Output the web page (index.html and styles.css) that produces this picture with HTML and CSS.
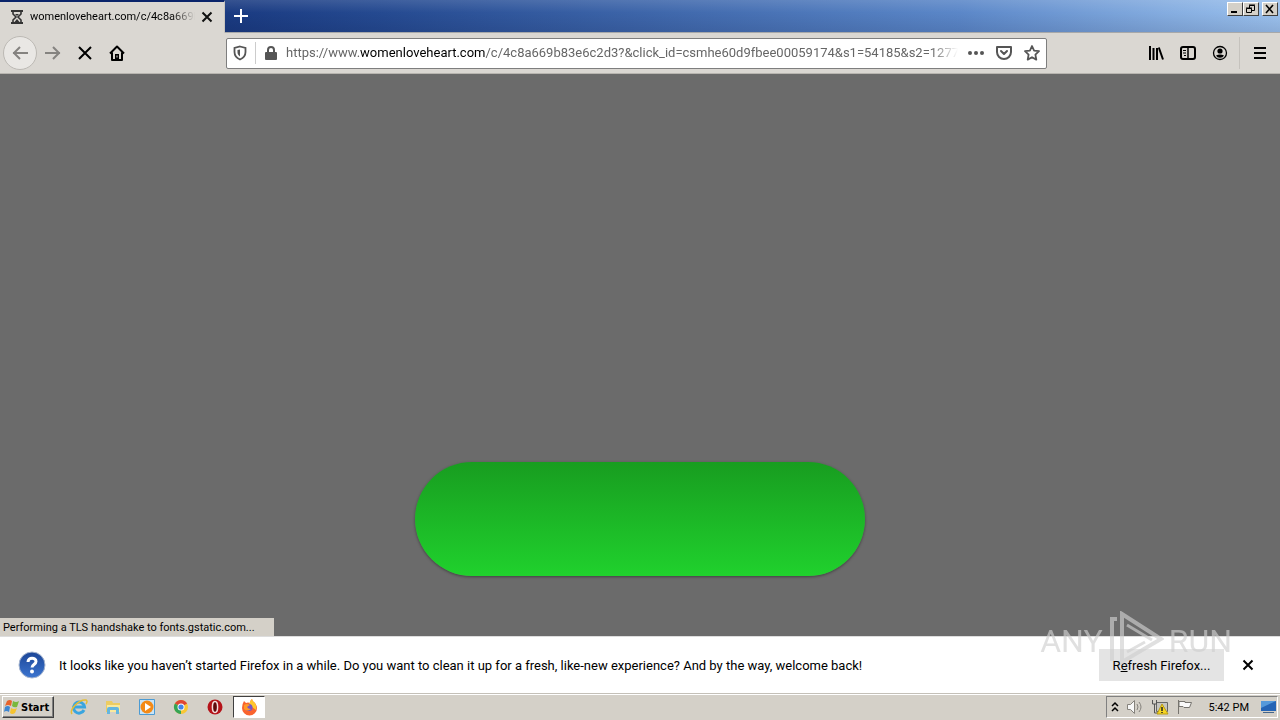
FILE: index.html
```html
<!DOCTYPE html>
<html lang="en">
<head>
<meta charset="utf-8">
<title>womenloveheart.com</title>
<link rel="stylesheet" href="styles.css">
</head>
<body>
<div class="desktop">
  <header class="titlebar">
    <div class="tab">
      <svg class="tab-icon" width="14" height="16" viewBox="0 0 14 16" fill="none" stroke="#333" stroke-width="2"><path d="M1 2h12M1 14h12"/><path d="M3 3v2l3 3-3 3v2M11 3v2L8 8l3 3v2" stroke-width="1.6"/><path d="M5 5h4L7 7zM4.500 13L7 10l2.500 3z" fill="#333" stroke="none"/></svg>
      <span class="tab-title">womenloveheart.com/c/4c8a669b</span>
      <button class="plain" aria-label="Close tab"><svg width="12" height="12" viewBox="0 0 12 12" stroke="#111" stroke-width="2"><path d="M1.500 1.500l9 9M10.500 1.500l-9 9"/></svg></button>
    </div>
    <button class="plain new-tab" aria-label="New tab"><svg width="14" height="14" viewBox="0 0 14 14" stroke="#fff" stroke-width="2"><path d="M7 0v14M0 7h14"/></svg></button>
    <div class="window-controls">
      <button class="win" aria-label="Minimize"><svg width="12" height="10" viewBox="0 0 12 10"><path d="M2 7h6v2H2z"/></svg></button>
      <button class="win" aria-label="Restore"><svg width="12" height="10" viewBox="0 0 12 10" fill="none" stroke="#000"><path d="M4.500 4V1.500h5v5H7M4 1h6M1.500 4.500h5v4h-5zM1 4h6"/></svg></button>
      <button class="win win-close" aria-label="Close"><svg width="12" height="10" viewBox="0 0 12 10" stroke="#000" stroke-width="1.600"><path d="M2 1l7 8M9 1L2 9"/></svg></button>
    </div>
  </header>
  <nav class="toolbar">
    <button class="plain tool back" aria-label="Back"><svg width="16" height="16" viewBox="0 0 16 16" fill="none" stroke="#858380" stroke-width="2"><path d="M16 8H1M8 2L2 8l6 6"/></svg></button>
    <button class="plain tool" aria-label="Forward"><svg width="16" height="16" viewBox="0 0 16 16" fill="none" stroke="#858380" stroke-width="2"><path d="M0 8h15M8 2l6 6-6 6"/></svg></button>
    <button class="plain tool" aria-label="Stop"><svg width="16" height="16" viewBox="0 0 16 16" stroke="#000" stroke-width="2"><path d="M2 2l12 12M14 2L2 14"/></svg></button>
    <button class="plain tool" aria-label="Home"><svg width="16" height="16" viewBox="0 0 16 16" fill="none" stroke="#000" stroke-width="2" stroke-linejoin="round"><path d="M1 8.500L8 1.500l7 7M3 7.500V15h10V7.500"/><path d="M6 9h4v5H6z" fill="#000" stroke="none"/><path d="M8 10.500v2" stroke="#dad7d2" stroke-width="1"/></svg></button>
    <div class="address">
      <svg width="14" height="16" viewBox="0 0 14 16" fill="none" stroke="#555" stroke-width="1.800"><path d="M7 1.500l5.500 1.500v4c0 4-2 6-5.500 7.500C3.500 13 1.500 11 1.500 7V3z"/><path d="M7 4.500v7C5.200 10.300 4.500 9 4.500 7V5z" fill="#555" stroke="none"/></svg>
      <span class="separator"></span>
      <svg width="14" height="16" viewBox="0 0 14 16"><rect x="1" y="7" width="12" height="8" rx="1" fill="#555"/><path d="M4 8V5a3 3 0 0 1 6 0v3" fill="none" stroke="#555" stroke-width="2"/></svg>
      <div class="url" role="textbox" aria-label="Address">https://www.<b>womenloveheart.com</b>/c/4c8a669b83e6c2d3?&amp;click_id=csmhe60d9fbee00059174&amp;s1=54185&amp;s2=127749</div>
      <button class="plain" aria-label="Page actions"><svg width="16" height="16" viewBox="0 0 16 16" fill="#555"><circle cx="2" cy="8" r="2"/><circle cx="8" cy="8" r="2"/><circle cx="14" cy="8" r="2"/></svg></button>
      <button class="plain" aria-label="Save to Pocket"><svg width="16" height="16" viewBox="0 0 16 16" fill="none" stroke="#555" stroke-width="2" stroke-linejoin="round"><path d="M1 2h14v5a7 7 0 0 1-14 0z"/><path d="M5 6l3 3 3-3" stroke-linecap="round"/></svg></button>
      <button class="plain" aria-label="Bookmark"><svg width="16" height="16" viewBox="0 0 16 16" fill="none" stroke="#555" stroke-width="1.800" stroke-linejoin="round"><path d="M8 1l2.100 4.600 4.900.6-3.600 3.400.9 5L8 12.200l-4.300 2.400.9-5L1 6.200l4.900-.6z"/></svg></button>
    </div>
    <div class="tools-right">
      <button class="plain tool" aria-label="Library"><svg width="16" height="16" viewBox="0 0 16 16" stroke="#000" stroke-width="2"><path d="M2 1v14M5.500 3v12M9 3v12M10.800 2.500l4.200 12"/></svg></button>
      <button class="plain tool" aria-label="Sidebars"><svg width="16" height="16" viewBox="0 0 16 16" fill="none" stroke="#000"><rect x="1" y="2" width="14" height="12" rx="2" stroke-width="2"/><path d="M8 2v12" stroke-width="1.500"/><path d="M3 5.500h3M3 8h3M4 10.500h2"/></svg></button>
      <button class="plain tool" aria-label="Account"><svg width="16" height="16" viewBox="0 0 16 16"><circle cx="8" cy="8" r="6.500" fill="none" stroke="#000" stroke-width="1.300"/><circle cx="8" cy="6" r="2.600"/><path d="M4 10.500Q8 8.500 12 10.500 11 12.800 8 12.800T4 10.500z"/></svg></button>
      <span class="tool-rule"></span>
      <button class="plain tool" aria-label="Menu"><svg width="12" height="12" viewBox="0 0 12 12" stroke="#000" stroke-width="2"><path d="M0 1h12M0 6h12M0 11h12"/></svg></button>
    </div>
  </nav>
  <main class="page">
    <button class="cta" aria-label="Continue"></button>
    <div class="status">Performing a TLS handshake to fonts.gstatic.com...</div>
  </main>
  <section class="notice">
    <svg width="28" height="28" viewBox="0 0 28 28"><defs><linearGradient id="help" x2="0" y2="1"><stop stop-color="#1c4697"/><stop offset="1" stop-color="#3c75d0"/></linearGradient></defs><circle cx="14" cy="14" r="13" fill="url(#help)" stroke="#a6b5cf"/><path d="M10 11c0-5 8-5 8-.5 0 3-4 3-4 6" fill="none" stroke="#fff" stroke-width="3"/><circle cx="14" cy="20.500" r="2" fill="#fff"/></svg>
    <p class="notice-text">It looks like you haven’t started Firefox in a while. Do you want to clean it up for a fresh, like-new experience? And by the way, welcome back!</p>
    <button class="refresh">R<u>e</u>fresh Firefox...</button>
    <button class="plain notice-close" aria-label="Dismiss"><svg width="12" height="12" viewBox="0 0 12 12" stroke="#000" stroke-width="2"><path d="M1.500 1.500l9 9M10.500 1.500l-9 9"/></svg></button>
    <div class="watermark">
      <span>ANY</span>
      <svg width="56" height="60" viewBox="0 0 56 60" fill="none" stroke="#d0d0d0" stroke-width="4"><path d="M9 8H4v42"/><path d="M14 3l39 25-39 23z"/><path d="M19 14l25 15M19 41l18-10" stroke-width="3"/></svg>
      <span>RUN</span>
    </div>
  </section>
  <footer class="taskbar">
    <button class="start"><svg width="16" height="16" viewBox="0 0 16 16"><path d="M3 2q3-2 5 0L7 7Q4 5 1 7z" fill="#e8632b"/><path d="M9 2q3 2 6 0l-2 6q-3 1-5-1z" fill="#79b83c"/><path d="M1 8q3-2 5 0l-1 5q-3-2-5 0z" fill="#3e86d1"/><path d="M7 9q3 2 6 0l-2 5q-3 2-5 0z" fill="#f5c330"/></svg>Start</button>
    <div class="launchers">
      <button class="launch" aria-label="Internet Explorer"><svg width="18" height="18" viewBox="0 0 18 18" fill="none"><path d="M14 12a5.500 5.500 0 1 1 .5-3H5" stroke="#39a5df" stroke-width="3"/><path d="M2 16C-1 12 9 1 16 2q2 1 0 4" stroke="#e4bd35" stroke-width="1.500"/></svg></button>
      <button class="launch" aria-label="Explorer"><svg width="18" height="18" viewBox="0 0 18 18"><path d="M2 3h6l1 2h7v9H2z" fill="#edcc62"/><path d="M3 7h13v7H3z" fill="#fae99d"/><path d="M3 16v-5q0-2 2-2h8q2 0 2 2v5h-3v-4H6v4z" fill="#65b6df"/></svg></button>
      <button class="launch" aria-label="Media Player"><svg width="18" height="18" viewBox="0 0 18 18"><path d="M1.500 1.500h15v15h-15z" fill="#c9e4f7" stroke="#4c9bd3"/><circle cx="9" cy="9" r="6.500" fill="#f48a16"/><path d="M7 5l6 4-6 4z" fill="#fff"/></svg></button>
      <button class="launch" aria-label="Chrome"><svg width="18" height="18" viewBox="0 0 18 18"><circle cx="9" cy="9" r="7" fill="#f9c734"/><path d="M9 9L2.900 5.500a7 7 0 0 1 12.200 0z" fill="#df4634"/><path d="M9 9v7A7 7 0 0 1 2.900 5.500z" fill="#35a455"/><circle cx="9" cy="9" r="3.500" fill="#fff"/><circle cx="9" cy="9" r="2.600" fill="#4384e8"/></svg></button>
      <button class="launch" aria-label="Opera"><svg width="18" height="18" viewBox="0 0 18 18"><circle cx="9" cy="9" r="7.500" fill="#b51219"/><ellipse cx="9" cy="9" rx="2.600" ry="5.500" fill="#5f080b" stroke="#f3dddd" stroke-width="1.500"/></svg></button>
      <button class="launch active" aria-label="Firefox"><svg width="18" height="18" viewBox="0 0 18 18"><path d="M4 3l2 2q2-1 4 0 0-3 2-4 0 2 3 4 2 3 2 5a7.500 7.500 0 0 1-15 0q0-4 2-7z" fill="#f9632e"/><path d="M12 1q0 2 3 4 2 3 1 7l-4-3-3-3q1-3 3-5z" fill="#ffc72c"/><circle cx="9" cy="9.500" r="3.500" fill="#7655c7"/><path d="M4 7q3-2 6 0l-3 2q1 2 4 2-4 3-7 0z" fill="#ff9927"/></svg></button>
    </div>
    <div class="tray">
      <svg width="8" height="12" viewBox="0 0 8 12" fill="none" stroke="#000" stroke-width="1.500"><path d="M1 5l3-3 3 3M1 10l3-3 3 3"/></svg>
      <svg width="18" height="18" viewBox="0 0 18 18" fill="none" stroke="#85827c"><path d="M1.500 6.500h3l4-4v13l-4-4h-3z" fill="#f8f8f8"/><path d="M11 6q2 3 0 6M13 4q4 5 0 10"/></svg>
      <svg width="18" height="18" viewBox="0 0 18 18"><path d="M5.500 4.500h11v9h-11z" fill="#c6c5c0" stroke="#666"/><path d="M1.500 2v4h4V2M3.500 6v9h4" fill="none" stroke="#555"/><path d="M11 6l6 10H6z" fill="#f6d522" stroke="#b99b12"/><path d="M11 9v4M11 14v1" stroke="#222" stroke-width="1.500"/></svg>
      <svg width="18" height="18" viewBox="0 0 18 18" fill="#fafafa" stroke="#77746f"><path d="M2.500 2v14M3 3.500h6v1h6.500l-2 5H8l-1-1H3z"/></svg>
      <time class="clock">5:42 PM</time>
      <svg width="18" height="18" viewBox="0 0 18 18"><path d="M2 3h15v10H2z" fill="#2464b5"/><path d="M2 3h15L2 10z" fill="#5599da"/><path d="M4 14h11v1H4z" fill="#44658a"/></svg>
    </div>
  </footer>
</div>
</body>
</html>
```
FILE: styles.css
```css
* { box-sizing: border-box; }
body { margin: 0; font-family: Roboto, "Liberation Sans", sans-serif; font-size: 13px; color: #000; }
button { font: inherit; color: inherit; }
svg { display: block; flex: none; }
.desktop { display: flex; flex-direction: column; min-height: 100vh; }
.plain { display: flex; align-items: center; justify-content: center; padding: 0; border: 0; background: none; flex: none; }

.titlebar { display: flex; height: 33px; background: linear-gradient(rgba(255,255,255,0.12), transparent 40%, rgba(0,0,30,0.1)), linear-gradient(90deg, #0a246a, #254a91 30%, #5b87c8 75%, #9bc1ed); border-bottom: 1px solid #a7a8a9; }
.tab { display: flex; align-items: center; gap: 6px; width: 225px; height: 33px; padding: 0 11px 1px 10px; border-top: 2px solid #0a246a; border-right: 1px solid #c8c5bf; background: #dad7d2; }
.tab-title { flex: 1; min-width: 0; overflow: hidden; white-space: nowrap; font-size: 11px; line-height: 16px; mask-image: linear-gradient(90deg, #000 86%, transparent); }
.new-tab { width: 32px; }
.window-controls { display: flex; margin: 2px 2px 0 auto; }
.win { display: flex; align-items: center; justify-content: center; width: 16px; height: 14px; padding: 0; border: 1px solid; border-color: #fff #404040 #404040 #fff; background: #d4d0c8; }
.win-close { margin-left: 3px; }

.toolbar { display: flex; align-items: center; height: 41px; padding: 0 4px 0 3px; background: #dad7d2; border-bottom: 1px solid #b8b5b0; }
.tool { width: 32px; height: 32px; }
.back { width: 34px; height: 34px; border: 1px solid #bcb9b4; border-radius: 50%; background: #e9e7e4; }
.address { display: flex; align-items: center; gap: 8px; flex: 0 1 821px; min-width: 0; height: 31px; margin-left: 93px; padding: 0 4px 0 6px; border: 1px solid #7e7e7e; border-radius: 2px; background: #fff; }
.separator { width: 1px; height: 22px; background: #ccc; }
.url { flex: 1; min-width: 0; overflow: hidden; white-space: nowrap; color: #666; line-height: 20px; mask-image: linear-gradient(90deg, #000 96%, transparent); }
.url b { font-weight: 400; color: #000; }
.address .plain { width: 20px; }
.tools-right { display: flex; align-items: center; margin-left: auto; }
.tool-rule { width: 1px; height: 32px; margin: 0 4px 0 3px; background: #c5c2bd; }

.page { position: relative; display: flex; flex: 1; align-items: flex-end; justify-content: center; padding: 60px 20px; background: #6b6b6b; }
.cta { width: 450px; height: 114px; border: 0; border-radius: 57px; background: linear-gradient(#189d20, #20d12d); box-shadow: 0 1px 3px rgba(0,0,0,0.4); }
.status { position: absolute; left: 0; bottom: 0; width: 274px; padding: 2px 3px 0; background: #d4d0c8; font-size: 11px; line-height: 16px; white-space: nowrap; }

.notice { position: relative; display: flex; align-items: center; height: 57px; padding: 0 22px 0 18px; background: #fff; border-top: 1px solid #ddd; }
.notice-text { margin: 0 auto 0 13px; line-height: 20px; padding-top: 2px; }
.refresh { width: 125px; height: 32px; padding: 0; border: 0; background: #e4e4e4; }
.notice-close { width: 20px; height: 20px; margin-left: 14px; }
.watermark { position: absolute; right: 48px; bottom: 22px; display: flex; align-items: center; gap: 5px; opacity: 0.65; color: #d0d0d0; font-size: 32px; line-height: 60px; pointer-events: none; }

.taskbar { display: flex; align-items: center; height: 27px; padding: 0 2px; background: #d4d0c8; border-top: 1px solid #c4c0b8; box-shadow: inset 0 1px #fff; }
.start { display: flex; align-items: center; gap: 1px; width: 52px; height: 22px; padding: 0 1px; border: 1px solid; border-color: #fff #404040 #404040 #fff; box-shadow: inset -1px -1px #808080; background: #d4d0c8; font-family: "DejaVu Sans Condensed", "DejaVu Sans", sans-serif; font-weight: 700; font-size: 11px; }
.launchers { display: flex; gap: 2px; margin-left: 9px; }
.launch { display: flex; align-items: center; justify-content: center; width: 32px; height: 22px; padding: 0; border: 0; background: none; }
.active { border: 1px solid; border-color: #404040 #fff #fff #404040; background: #fff; }
.tray { display: flex; align-items: center; gap: 7px; height: 22px; margin-left: auto; padding: 0 0 0 4px; border: 1px solid; border-color: #808080 #fff #fff #808080; }
.clock { margin: 0 3px 0 8px; font-size: 11px; }
```
